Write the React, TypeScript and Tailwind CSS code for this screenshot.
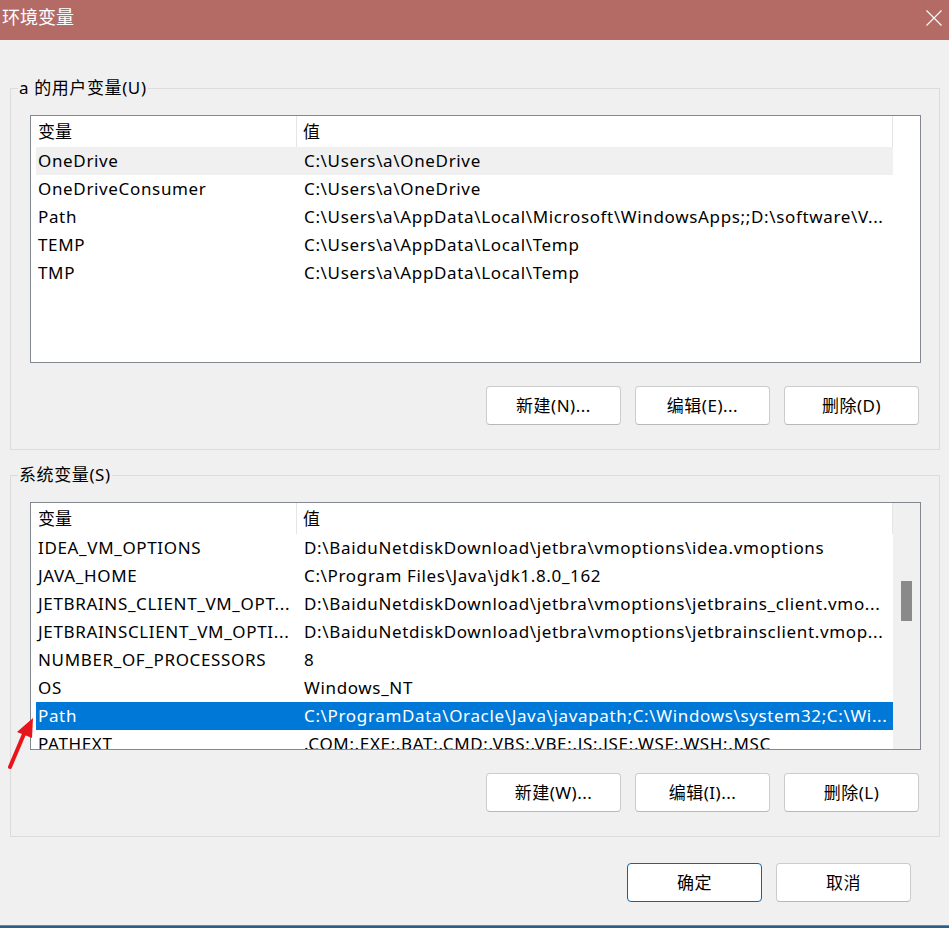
type Row = { name: string; value: string }

const userRows: Row[] = [
  { name: 'OneDrive', value: 'C:\\Users\\a\\OneDrive' },
  { name: 'OneDriveConsumer', value: 'C:\\Users\\a\\OneDrive' },
  { name: 'Path', value: 'C:\\Users\\a\\AppData\\Local\\Microsoft\\WindowsApps;;D:\\software\\V...' },
  { name: 'TEMP', value: 'C:\\Users\\a\\AppData\\Local\\Temp' },
  { name: 'TMP', value: 'C:\\Users\\a\\AppData\\Local\\Temp' },
]

const systemRows: Row[] = [
  { name: 'IDEA_VM_OPTIONS', value: 'D:\\BaiduNetdiskDownload\\jetbra\\vmoptions\\idea.vmoptions' },
  { name: 'JAVA_HOME', value: 'C:\\Program Files\\Java\\jdk1.8.0_162' },
  { name: 'JETBRAINS_CLIENT_VM_OPT...', value: 'D:\\BaiduNetdiskDownload\\jetbra\\vmoptions\\jetbrains_client.vmo...' },
  { name: 'JETBRAINSCLIENT_VM_OPTI...', value: 'D:\\BaiduNetdiskDownload\\jetbra\\vmoptions\\jetbrainsclient.vmop...' },
  { name: 'NUMBER_OF_PROCESSORS', value: '8' },
  { name: 'OS', value: 'Windows_NT' },
  { name: 'Path', value: 'C:\\ProgramData\\Oracle\\Java\\javapath;C:\\Windows\\system32;C:\\Wi...' },
  { name: 'PATHEXT', value: '.COM;.EXE;.BAT;.CMD;.VBS;.VBE;.JS;.JSE;.WSF;.WSH;.MSC' },
]

function VarList({ rows, hover, selected, scroll }: { rows: Row[]; hover?: number; selected?: number; scroll?: boolean }) {
  return (
    <div className="ml-[19px] mt-[16px] w-[891px] h-[248px] border border-[#828790] bg-white flex overflow-hidden">
      <div className="w-[862px] pl-[5px] flex flex-col shrink-0">
        <div className="flex h-[31px] w-[857px] shrink-0 items-center border-r border-[#e5e5e5]">
          <div className="w-[261px] pl-[2px] border-r border-[#e5e5e5] h-full flex items-center">变量</div>
          <div className="pl-[6px]">值</div>
        </div>
        {rows.map((r, i) => (
          <div
            key={r.name}
            className={
              'flex h-[28px] shrink-0 items-center whitespace-nowrap tracking-[0.65px] ' +
              (i === selected ? 'bg-[#0078d7] text-white' : i === hover ? 'bg-[#f0f0f0]' : '')
            }
          >
            <div className="w-[261px] pl-[2px] overflow-hidden shrink-0">{r.name}</div>
            <div className="pl-[7px] overflow-hidden">{r.value}</div>
          </div>
        ))}
      </div>
      {scroll ? (
        <div className="flex-1 bg-[#f0f0f0] pl-[8px] pt-[78px]">
          <div className="w-[11px] h-[40px] bg-[#8a8a8a]" />
        </div>
      ) : (
        <div className="flex-1" />
      )}
    </div>
  )
}

function Btn({ label, primary }: { label: string; primary?: boolean }) {
  return (
    <button
      className={
        'w-[135px] h-[39px] rounded-[4px] bg-white border flex items-center justify-center tracking-[0.5px] ' +
        (primary ? 'border-[#0067c0]' : 'border-[#cccccc] border-b-[#b8b8b8]')
      }
    >
      {label}
    </button>
  )
}

function Group({ title, rows, hover, selected, scroll, buttons, className }: {
  title: string
  rows: Row[]
  hover?: number
  selected?: number
  scroll?: boolean
  buttons: string[]
  className: string
}) {
  return (
    <fieldset className={'ml-[10px] w-[930px] border border-[#dcdcdc] pb-[24px] ' + className}>
      <legend className="ml-[7px] px-[1px] leading-[22px] tracking-[0.6px]">{title}</legend>
      <VarList rows={rows} hover={hover} selected={selected} scroll={scroll} />
      <div className="flex justify-end gap-[14px] pr-[20px] mt-[23px]">
        {buttons.map((b) => (
          <Btn key={b} label={b} />
        ))}
      </div>
    </fieldset>
  )
}

export default function App() {
  return (
    <div className="relative w-[949px] h-[928px] bg-[#f0f0f0] flex flex-col overflow-hidden text-[17px] text-black font-['Noto_Sans','Noto_Sans_CJK_SC',sans-serif]">
      <div className="h-[40px] shrink-0 bg-[#b56b65] flex items-start justify-between text-white">
        <span className="mt-[5px] ml-[2px] text-[18px] leading-[24px]">环境变量</span>
        <svg className="mt-[10px] mr-[7px]" width="16" height="16" viewBox="0 0 16 16">
          <path d="M0.5 0.5L15.5 15.5M15.5 0.5L0.5 15.5" stroke="white" strokeWidth="1.1" fill="none" />
        </svg>
      </div>

      <Group
        className="mt-[37px]"
        title="a 的用户变量(U)"
        rows={userRows}
        hover={0}
        buttons={['新建(N)...', '编辑(E)...', '删除(D)']}
      />

      <Group
        className="mt-[14px]"
        title="系统变量(S)"
        rows={systemRows}
        selected={6}
        scroll
        buttons={['新建(W)...', '编辑(I)...', '删除(L)']}
      />

      <div className="flex justify-end gap-[14px] pr-[38px] mt-[26px]">
        <Btn label="确定" primary />
        <Btn label="取消" />
      </div>

      <div className="mt-auto h-px bg-[#b56b65]" />
      <div className="h-[2px] bg-[#2a5f8a]" />

      <svg className="absolute left-0 top-[710px]" width="40" height="62" viewBox="0 0 40 62">
        <path d="M10 57L24 24" stroke="#e8141b" strokeWidth="4" strokeLinecap="round" />
        <polygon points="33,8 17,22 32,28" fill="#e8141b" />
      </svg>
    </div>
  )
}
